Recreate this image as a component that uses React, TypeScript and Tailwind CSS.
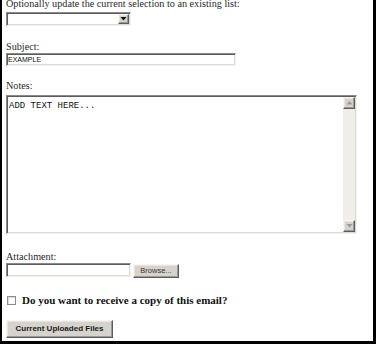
import React from "react";

const inset =
  "border border-t-[#8a8a8a] border-l-[#8a8a8a] border-b-[#f4f3f0] border-r-[#f4f3f0] shadow-[inset_1px_1px_0_#5c5c5c,inset_-1px_-1px_0_#dcdad4] bg-white";
const raised =
  "border border-t-[#f6f5f2] border-l-[#f6f5f2] border-b-[#5c5c5c] border-r-[#5c5c5c] shadow-[inset_-1px_-1px_0_#9a9a9a,inset_1px_1px_0_#e8e6e0] bg-[#d6d3cc]";

function Arrow({ dir, color }: { dir: "up" | "down"; color: string }) {
  return (
    <svg width="7" height="4" viewBox="0 0 7 4">
      {dir === "down" ? (
        <polygon points="0.5,0 6.5,0 3.5,3.5" fill={color} />
      ) : (
        <polygon points="0.5,3.5 6.5,3.5 3.5,0" fill={color} />
      )}
    </svg>
  );
}

export default function App() {
  return (
    <div className="w-[376px] h-[344px] overflow-hidden bg-white border-l-2 border-r-[3px] border-b-[3px] border-black pl-1 font-['Liberation_Serif',serif] text-black">
      <div className="flex flex-col items-start">
        <p className="mt-[-2px] text-[10.2px] leading-[12px] whitespace-nowrap text-[#2a2a2a]">
          Optionally update the current selection to an existing list:
        </p>
        <div className={`mt-[2px] w-[125px] h-[14px] ${inset} flex items-center justify-end pr-px`}>
          <div className={`w-[11px] h-[10px] ${raised} flex items-center justify-center`}>
            <Arrow dir="down" color="#111" />
          </div>
        </div>

        <p className="mt-[15px] text-[10.2px] leading-[12px] text-[#2a2a2a]">Subject:</p>
        <div className={`w-[230px] h-[13px] ${inset} flex items-center pl-[1px] font-['Liberation_Sans',sans-serif] text-[7px] leading-none text-[#111]`}>
          EXAMPLE
        </div>

        <p className="mt-[14px] text-[10.2px] leading-[12px] text-[#2a2a2a]">Notes:</p>
        <div className={`mt-[3px] w-[351px] h-[139px] ${inset} flex`}>
          <div className="flex-1 pl-[2px] pt-[5px] font-['Liberation_Mono',monospace] text-[9px] leading-[10px] whitespace-pre text-[#111]">
            ADD TEXT HERE...
          </div>
          <div className="w-[12px] mr-px my-px flex flex-col bg-[#efeee9]">
            <div className={`w-[12px] h-[12px] ${raised} flex items-center justify-center`}>
              <Arrow dir="up" color="#9a9a9a" />
            </div>
            <div className="flex-1" />
            <div className={`w-[12px] h-[12px] ${raised} flex items-center justify-center`}>
              <Arrow dir="down" color="#9a9a9a" />
            </div>
          </div>
        </div>

        <p className="mt-[17px] text-[10.2px] leading-[12px] text-[#2a2a2a]">Attachment:</p>
        <div className="flex items-start">
          <div className={`w-[125px] h-[14px] ${inset}`} />
          <div
            className={`ml-[2px] mt-px w-[46px] h-[14px] ${raised} flex items-center justify-center font-['Liberation_Sans',sans-serif] text-[7.5px] leading-none text-[#333]`}
          >
            Browse...
          </div>
        </div>

        <div className="mt-[16px] flex items-start">
          <div className="ml-px mt-[2px] w-[9px] h-[9px] border border-[#8c8c8c] bg-white shadow-[inset_1px_1px_0_#d8d8d8]" />
          <span className="ml-[6px] text-[11px] leading-[13px] font-bold whitespace-nowrap text-[#111]">
            Do you want to receive a copy of this email?
          </span>
        </div>

        <div
          className={`mt-[13px] w-[107px] h-[18px] ${raised} flex items-center justify-center font-['Liberation_Sans',sans-serif] text-[8px] leading-none font-bold text-[#1a1a1a]`}
        >
          Current Uploaded Files
        </div>
      </div>
    </div>
  );
}
